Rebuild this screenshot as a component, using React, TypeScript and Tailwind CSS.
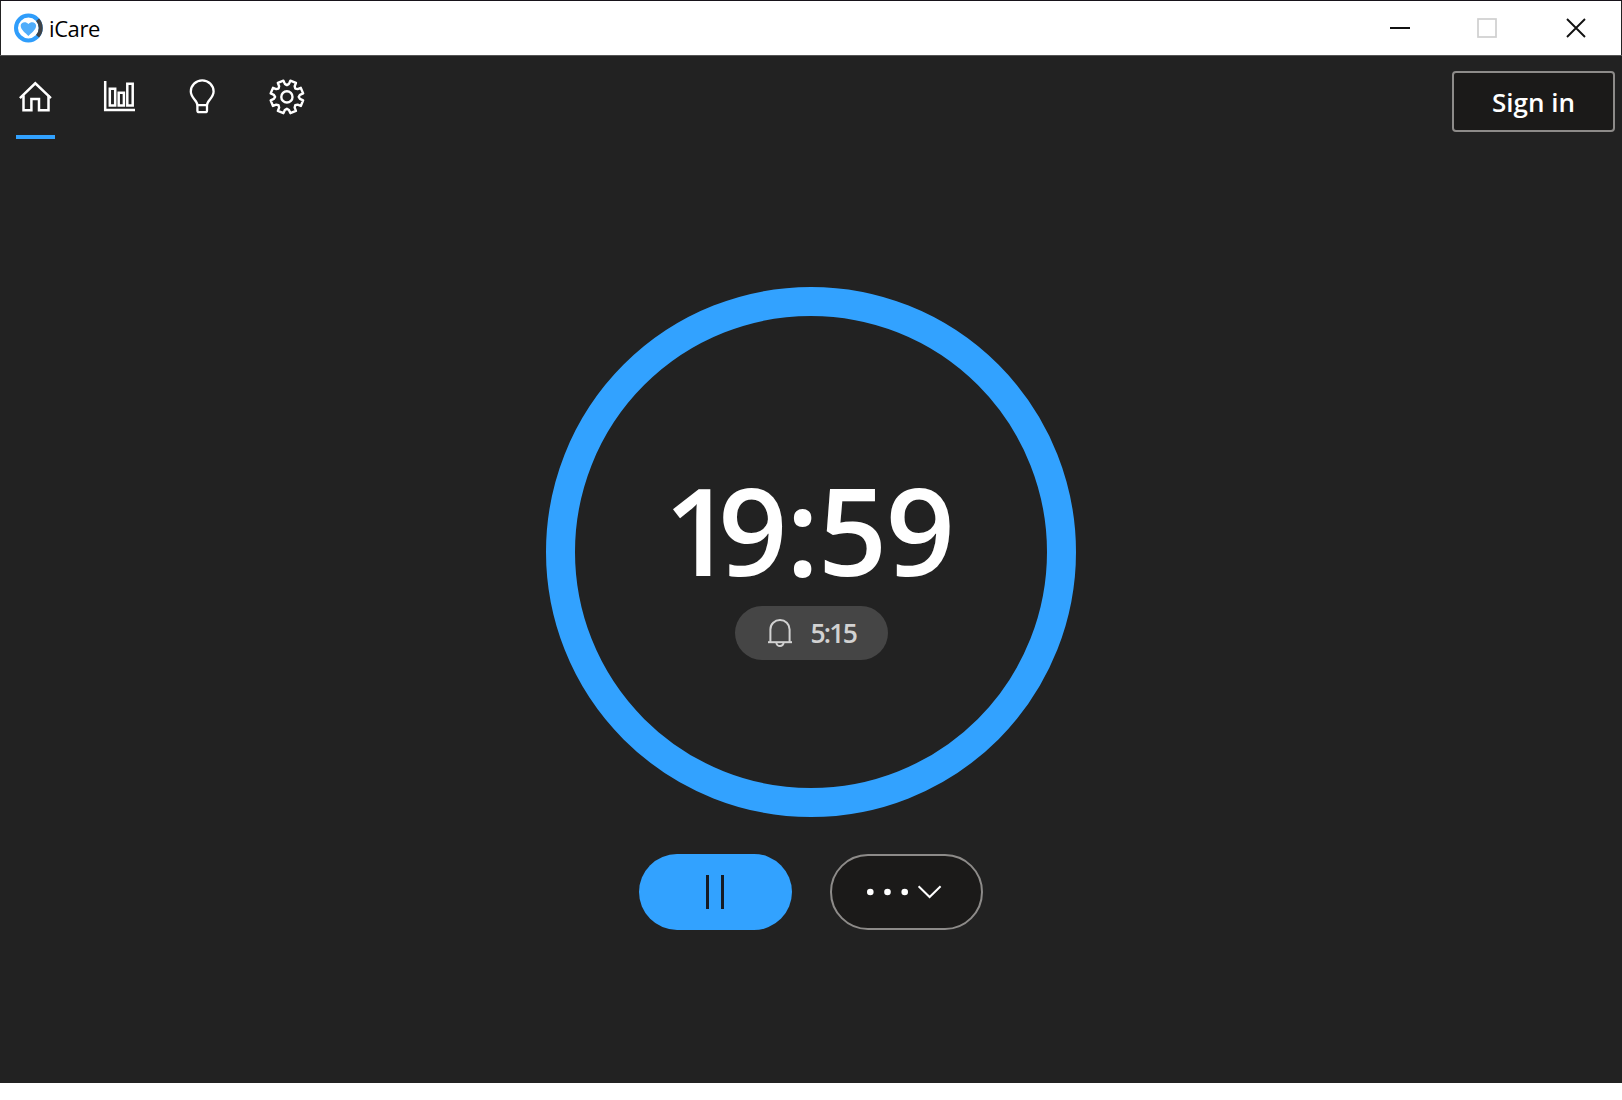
import React from "react";

function gearPath(c: number) {
  const points: string[] = [];
  for (let i = 0; i < 8; i++) {
    const mid = 22.5 + i * 45;
    const corners: [number, number][] = [
      [-22.5, 11.8],
      [-13.5, 13.2],
      [-10.5, 16.6],
      [10.5, 16.6],
      [13.5, 13.2],
    ];
    corners.forEach(([a, r]) => {
      const t = ((mid + a - 90) * Math.PI) / 180;
      points.push(`${(c + r * Math.cos(t)).toFixed(2)} ${(c + r * Math.sin(t)).toFixed(2)}`);
    });
  }
  return `M${points.join("L")}Z`;
}

const HomeIcon = () => (
  <svg width="36" height="36" viewBox="0 0 36 36" fill="none" stroke="#fff" strokeWidth="2.5">
    <path d="M2.9 19.1 18.3 4.3 33.9 19.1" />
    <path d="M6.5 16.3V31.2H14.4V20H22V31.2H31.5V16.3" />
  </svg>
);

const ChartIcon = () => (
  <svg width="36" height="36" viewBox="0 0 36 36" fill="none" stroke="#fff" strokeWidth="2.5">
    <path d="M4.2 2V31.1H34" />
    <path d="M8.8 9.8H14.2V26.5H8.8ZM17.7 13.8H22.9V26.5H17.7ZM26.3 4.7H31.7V26.5H26.3Z" />
  </svg>
);

const BulbIcon = () => (
  <svg width="36" height="36" viewBox="0 0 36 36" fill="none" stroke="#fff" strokeWidth="2.3" strokeLinejoin="round">
    <path d="M13.4 26.2C13.4 21.5 6.8 19 6.8 12.6A11.4 11.2 0 0 1 29.6 12.6C29.6 19 23 21.5 23 26.2Z" />
    <path d="M13.4 26.2V31.4Q13.4 33.2 15.2 33.2H21.2Q23 33.2 23 31.4V26.2" />
  </svg>
);

const GearIcon = () => (
  <svg width="36" height="36" viewBox="0 0 36 36" fill="none" stroke="#fff" strokeWidth="2.4" strokeLinejoin="round">
    <path d={gearPath(17.9)} />
    <circle cx="17.9" cy="17.9" r="5.6" />
  </svg>
);

const Logo = () => (
  <svg width="30" height="30" viewBox="0 0 30 30">
    <circle cx="15.4" cy="15" r="12.4" fill="none" stroke="#2f9dfb" strokeWidth="4" />
    <path d="M24.6 6.8A12.4 12.4 0 0 1 24.6 23.2" fill="none" stroke="#3f4246" strokeWidth="4" />
    <path
      d="M15.4 23C13 20.3 7.7 17 7.7 12.8C7.7 8.8 13 7.9 15.4 11.1C17.8 7.9 23.1 8.8 23.1 12.8C23.1 17 17.8 20.3 15.4 23Z"
      fill="#50adfb"
    />
  </svg>
);

const BellIcon = () => (
  <svg width="26" height="30" viewBox="0 0 26 30" fill="none" stroke="#d2d2d2" strokeWidth="2">
    <path d="M1 24.2H25" />
    <path d="M3.4 24V11.4A9.6 9.4 0 0 1 22.6 11.4V24" />
    <path d="M9.4 24.5A3.6 3.6 0 0 0 16.6 24.5" />
  </svg>
);

export default function App() {
  return (
    <div className="h-[1100px] w-[1622px] overflow-hidden bg-white font-['Open_Sans',sans-serif]">
      <div className="flex h-[1083px] flex-col border-t border-[#17131a] bg-[#222222]">
        <header className="mr-px ml-px flex h-[54px] shrink-0 items-center bg-white">
          <div className="mb-px ml-3 flex items-center">
            <Logo />
            <span className="mt-px ml-[6px] text-[22px] leading-none tracking-[-0.4px] text-black">iCare</span>
          </div>
          <div className="mr-[35px] mb-px ml-auto flex items-center">
            <svg width="20" height="20" viewBox="0 0 20 20">
              <path d="M0 10H20" stroke="#111" strokeWidth="2" />
            </svg>
            <svg className="ml-[67px]" width="20" height="20" viewBox="0 0 20 20">
              <rect x="1" y="1" width="18" height="18" fill="none" stroke="#cfcfcf" strokeWidth="1.7" />
            </svg>
            <svg className="ml-[69px]" width="20" height="20" viewBox="0 0 20 20">
              <path d="M1 1 19 19M19 1 1 19" stroke="#111" strokeWidth="1.9" />
            </svg>
          </div>
        </header>

        <nav className="flex h-[84px] shrink-0 items-start border-t border-[#555] pr-[7px] pl-4">
          <div className="mt-[23px] flex">
            <div className="flex w-[38px] flex-col items-center">
              <HomeIcon />
              <div className="mt-5 h-1 w-[39px] bg-[#32a2ff]" />
            </div>
            <div className="ml-[47px] flex gap-[47px]">
              <ChartIcon />
              <BulbIcon />
              <span className="ml-[2px]">
                <GearIcon />
              </span>
            </div>
          </div>
          <button className="mt-[15px] ml-auto flex h-[61px] w-[163px] items-center justify-center rounded-[4px] border-2 border-[#8d8b89] bg-[#1b1a19] text-[26px] font-semibold text-white">
            <span className="mt-px">Sign in</span>
          </button>
        </nav>

        <main className="flex flex-col items-center pt-[148px]">
          <div className="flex size-[530px] flex-col items-center rounded-full border-[29px] border-[#32a2ff]">
            <div className="mt-[153px] -ml-[3px] h-[120px] text-[121px] leading-[120px] font-semibold whitespace-nowrap text-white">
              <span className="tracking-[-15px]">1</span>
              <span className="tracking-[-1.5px]">9</span>
              <span className="tracking-[-1px]">:</span>
              <span className="tracking-[-1.5px]">5</span>
              <span>9</span>
            </div>
            <div className="mt-[17px] flex h-[54px] w-[153px] items-center rounded-full bg-[#454545] pl-[32px]">
              <BellIcon />
              <span className="mt-[2px] ml-[18px] text-[26.5px] font-semibold tracking-[-1.8px] text-[#d2d2d2]">5:15</span>
            </div>
          </div>

          <div className="mt-[37px] flex gap-[38px]">
            <button className="flex h-[76px] w-[153px] items-center justify-center gap-[12px] rounded-full bg-[#32a2ff] pr-px">
              <span className="h-[34px] w-[3px] bg-[#151b24]" />
              <span className="h-[34px] w-[3px] bg-[#151b24]" />
            </button>
            <button className="flex h-[76px] w-[153px] items-center rounded-full border-2 border-[#8d8b89] bg-[#1b1a19] pl-[34px]">
              <svg width="78" height="16" viewBox="0 0 78 16" fill="#fff">
                <circle cx="4.3" cy="8" r="3.3" />
                <circle cx="21.5" cy="8" r="3.3" />
                <circle cx="38.7" cy="8" r="3.3" />
                <path d="M52.6 2.2 63.6 13 74.6 2.2" fill="none" stroke="#fff" strokeWidth="2" />
              </svg>
            </button>
          </div>
        </main>
      </div>
    </div>
  );
}
